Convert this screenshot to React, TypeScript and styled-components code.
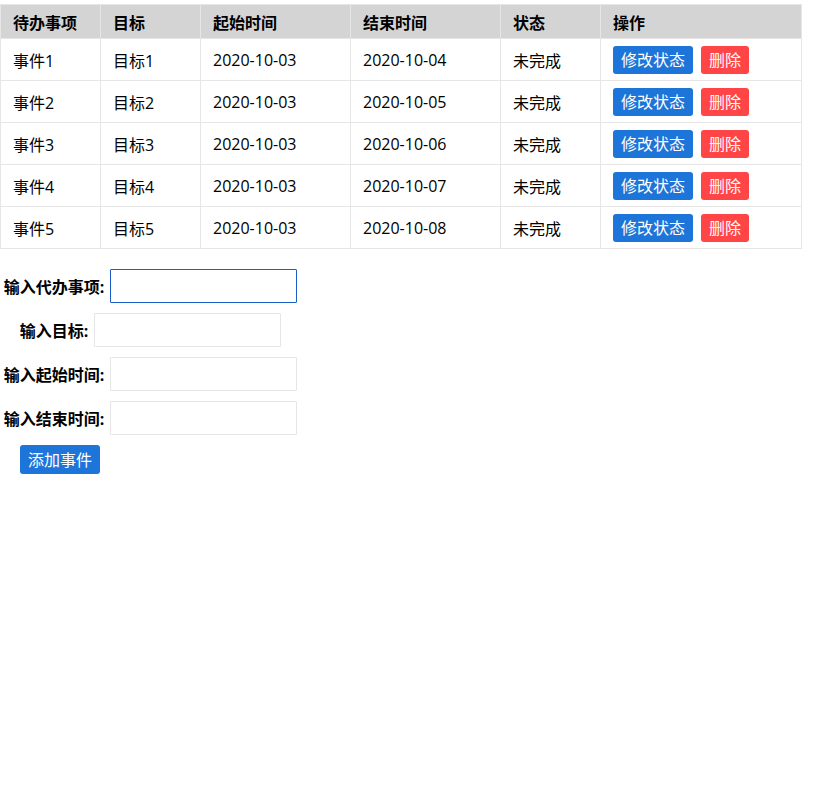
import React from 'react';
import styled, { createGlobalStyle } from 'styled-components';

const GlobalStyle = createGlobalStyle`
  body {
    margin: 0;
    background: #fff;
    font-family: "Open Sans", "Noto Sans CJK SC", sans-serif;
    color: #000;
  }
`;

const Page = styled.div`
  padding-top: 4px;
`;

const Table = styled.table`
  width: 801px;
  border-collapse: collapse;
  table-layout: fixed;
  font-size: 16px;
`;

const HeadCell = styled.th<{ w: number }>`
  width: ${p => p.w}px;
  height: 34px;
  padding: 0 0 0 12px;
  box-sizing: border-box;
  text-align: left;
  font-weight: bold;
  background: #d4d4d4;
  border: 1px solid #e6e6e6;
`;

const Cell = styled.td`
  height: 42px;
  padding: 0 0 0 12px;
  box-sizing: border-box;
  border: 1px solid #e6e6e6;
  white-space: nowrap;
`;

const Btn = styled.button<{ kind: 'primary' | 'danger' }>`
  height: 28px;
  padding: 0 8px;
  margin-right: 8px;
  border: none;
  border-radius: 3px;
  color: #fff;
  font-family: inherit;
  font-size: 16px;
  line-height: 28px;
  vertical-align: middle;
  background: ${p => (p.kind === 'primary' ? '#1d74d9' : '#ff4545')};
`;

const Form = styled.div`
  width: 301px;
  margin-top: 20px;
  display: flex;
  flex-direction: column;
  align-items: center;
  gap: 10px;
`;

const Row = styled.div`
  display: flex;
  align-items: center;
  gap: 6px;
`;

const Label = styled.label`
  font-size: 16px;
  font-weight: bold;
`;

const Input = styled.input<{ focused?: boolean }>`
  width: 187px;
  height: 34px;
  box-sizing: border-box;
  border: 1px solid ${p => (p.focused ? '#1a5fc8' : '#e6e6e6')};
  border-radius: 1px;
  outline: none;
  padding: 0 8px;
  font-size: 16px;
  font-family: inherit;
`;

const AddRow = styled.div`
  align-self: flex-start;
  padding-left: 20px;
`;

const AddBtn = styled(Btn)`
  height: 29px;
  margin: 0;
`;

const events = [
  { name: '事件1', target: '目标1', start: '2020-10-03', end: '2020-10-04' },
  { name: '事件2', target: '目标2', start: '2020-10-03', end: '2020-10-05' },
  { name: '事件3', target: '目标3', start: '2020-10-03', end: '2020-10-06' },
  { name: '事件4', target: '目标4', start: '2020-10-03', end: '2020-10-07' },
  { name: '事件5', target: '目标5', start: '2020-10-03', end: '2020-10-08' },
];

const heads: [string, number][] = [
  ['待办事项', 100],
  ['目标', 100],
  ['起始时间', 150],
  ['结束时间', 150],
  ['状态', 100],
  ['操作', 201],
];

const fields = ['输入代办事项:', '输入目标:', '输入起始时间:', '输入结束时间:'];

const App: React.FC = () => {
  return (
    <Page>
      <GlobalStyle />
      <Table>
        <thead>
          <tr>
            {heads.map(([h, w]) => (
              <HeadCell key={h} w={w}>{h}</HeadCell>
            ))}
          </tr>
        </thead>
        <tbody>
          {events.map(e => (
            <tr key={e.name}>
              <Cell>{e.name}</Cell>
              <Cell>{e.target}</Cell>
              <Cell>{e.start}</Cell>
              <Cell>{e.end}</Cell>
              <Cell>未完成</Cell>
              <Cell>
                <Btn kind="primary">修改状态</Btn>
                <Btn kind="danger">删除</Btn>
              </Cell>
            </tr>
          ))}
        </tbody>
      </Table>

      <Form>
        {fields.map((f, i) => (
          <Row key={f}>
            <Label>{f}</Label>
            <Input focused={i === 0} autoFocus={i === 0} />
          </Row>
        ))}
        <AddRow>
          <AddBtn kind="primary">添加事件</AddBtn>
        </AddRow>
      </Form>
    </Page>
  );
};

export default App;
